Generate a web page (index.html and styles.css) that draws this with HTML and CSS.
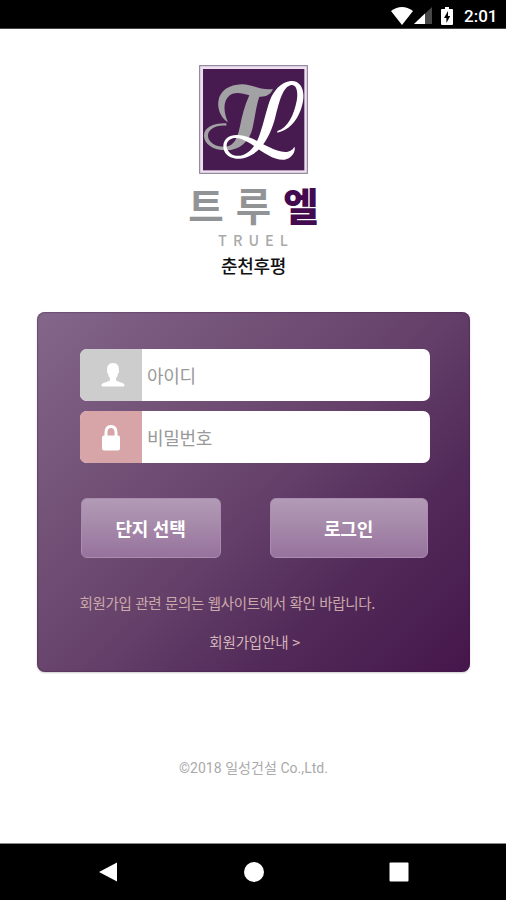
FILE: index.html
```
<!DOCTYPE html>
<html lang="ko">
<head>
<meta charset="utf-8">
<title>트루엘</title>
<link rel="stylesheet" href="styles.css">
</head>
<body>
<header class="status">
  <svg class="wifi" viewBox="0 0 22 18"><path d="M0 4Q11-4 22 4L11 18Z"/></svg>
  <svg class="signal" viewBox="0 0 18 17"><path class="dim" d="M18 0V17H0Z"/><path d="M11 6.600V17H0Z"/></svg>
  <svg class="battery" viewBox="0 0 12 18"><path d="M1 2H4V0H8V2H11Q12 2 12 3V17Q12 18 11 18H1Q0 18 0 17V3Q0 2 1 2Z"/><path class="bolt" d="M7 4L3 11H5.400V16L9.200 9H7Z"/></svg>
  <span class="clock">2:01</span>
</header>
<main>
  <section class="brand">
    <svg class="mark" viewBox="57 31 327 327">
      <rect class="frame" x="59" y="33" width="323" height="323"/>
      <rect class="plate" x="69" y="43" width="304" height="304"/>
      <path class="silver" d="M279 103C272 120 258 127 238 126C229 151 225 187 218 219C209 261 178 287 138 287C99 287 72 267 72 243C72 218 100 205 139 206L139 213C107 210 84 224 84 243C84 262 107 278 138 276C160 273 172 253 179 219C186 185 193 154 208 122C184 113 158 111 147 124C130 140 129 168 144 203C124 190 112 165 115 141C119 107 148 90 185 89C215 88 244 109 279 103Z"/>
      <path class="white" d="M292 229C324 220 342 180 350 139C356 106 347 87 331 92C306 100 297 147 286 187C277 223 262 256 241 280C218 304 190 314 168 312C143 309 129 293 130 273C131 252 149 240 172 241C208 243 235 261 267 277C297 292 330 301 343 276C349 288 335 313 314 315C282 318 249 292 218 271C191 252 164 243 148 256C131 269 142 299 167 303C195 307 220 284 234 253C249 216 255 180 269 139C281 107 304 82 332 79C361 77 375 104 369 140C361 188 330 228 292 234Z"/>
    </svg>
    <div class="name"><span>트</span><span>루</span><span class="accent">엘</span></div>
    <div class="latin">TRUEL</div>
    <div class="site">춘천후평</div>
  </section>
  <form class="card">
    <label class="field">
      <span class="tag"><svg class="user" viewBox="0 0 24 24"><path d="M12 0C7.500 0 5.800 3 6.200 7C5.500 8 6 10 7 10.500C7.400 13 8 14 9 15V17C8 19 1 19 .5 22Q.2 23.500 2 23.500H22Q23.800 23.500 23.500 22C23 19 16 19 15 17V15C16 14 16.600 13 17 10.500C18 10 18.500 8 17.800 7C18.200 3 16.500 0 12 0Z"/></svg></span>
      <input type="text" placeholder="아이디">
    </label>
    <label class="field">
      <span class="tag rose"><svg class="lock" viewBox="0 0 18 26"><path class="shackle" d="M4 12V7.500Q4 1.500 9 1.500T14 7.500V12"/><rect y="10.500" width="18" height="15" rx="2"/></svg></span>
      <input type="password" placeholder="비밀번호">
    </label>
    <div class="actions">
      <button type="button" class="choose">단지 선택</button>
      <button type="button" class="login">로그인</button>
    </div>
    <p class="note">회원가입 관련 문의는 웹사이트에서 확인 바랍니다.</p>
    <a class="guide">회원가입안내 &gt;</a>
  </form>
  <footer class="copy">©2018 일성건설 Co.,Ltd.</footer>
</main>
<nav class="nav">
  <svg viewBox="0 0 20 20"><path d="M19 .5V19.500L1 10Z"/></svg>
  <svg viewBox="0 0 20 20"><circle cx="10" cy="10" r="10"/></svg>
  <svg viewBox="0 0 20 20"><rect x=".5" y=".5" width="19" height="19" rx="1"/></svg>
</nav>
</body>
</html>
```
FILE: styles.css
```
* { box-sizing: border-box; }
body {
  margin: 0;
  height: 900px;
  display: flex;
  flex-direction: column;
  background: #fff;
  font-family: Roboto, "Noto Sans CJK KR", sans-serif;
  overflow: hidden;
}
svg { display: block; }
.status {
  height: 29px;
  padding: 3px 9px 0 0;
  display: flex;
  flex: none;
  align-items: center;
  justify-content: flex-end;
  background: #000;
  border-bottom: 1px solid #444;
  color: #fff;
}
.status svg { fill: #fff; }
.wifi { width: 22px; height: 18px; }
.signal { width: 18px; height: 17px; margin-left: 1px; }
.status .dim { fill: #484848; }
.battery { width: 12px; height: 18px; margin-left: 9px; }
.status .bolt { fill: #000; }
.clock { width: 33px; margin-left: 11px; font-size: 17px; font-weight: 500; line-height: 20px; white-space: nowrap; }
main { flex: 1; display: flex; flex-direction: column; align-items: center; padding-left: 1px; }
.brand {
  height: 282.500px;
  padding-top: 36px;
  display: flex;
  flex-direction: column;
  align-items: center;
}
.mark { width: 109px; height: 109px; }
.frame { fill: #eee0f0; stroke: #81758a; stroke-width: 3; }
.plate { fill: #481b50; }
.silver { fill: #a2a2a5; }
.white { fill: #fff; }
.name {
  height: 56px;
  padding-top: 9px;
  display: flex;
  gap: 12px;
  color: #929395;
  font: 700 38.500px/42px "Noto Sans CJK KR", sans-serif;
}
.name .accent { color: #430a50; font-weight: 900; }
.latin {
  height: 18px;
  padding-left: 5px;
  color: #aaa;
  font: 500 14.500px/19px "Noto Sans CJK KR", sans-serif;
  letter-spacing: 6px;
}
.site { color: #111; font-size: 18px; font-weight: 500; line-height: 37px; letter-spacing: -.3px; }
.card {
  width: 433px;
  height: 360.500px;
  padding: 37.500px 40px 0 42.500px;
  display: flex;
  flex-direction: column;
  border-radius: 8px;
  background: linear-gradient(135deg, #83678a 0%, #755479 25%, #66426b 50%, #522a59 73%, #45164b 100%);
  box-shadow: inset 0 0 2px #421449, 0 1px 2px #ccc;
}
.field {
  width: 350px;
  height: 52px;
  margin-bottom: 10px;
  display: flex;
  flex: none;
  border-radius: 7px;
  overflow: hidden;
  background: #fff;
}
.tag { width: 62.500px; display: grid; place-items: center; background: #cdcdcd; }
.rose { background: #d7a5a7; }
.tag svg { fill: #fff; }
.user { width: 24px; height: 24px; margin: 0 0 0 4px; }
.lock { width: 18px; height: 26px; margin: 2px 0 0 1px; }
.lock .shackle { fill: none; stroke: #fff; stroke-width: 3; }
input {
  width: 287px;
  padding: 0 5px 1px;
  border: 0;
  outline: 0;
  background: none;
  font: 400 18px "Noto Sans CJK KR", sans-serif;
  letter-spacing: -.3px;
}
input::placeholder { color: #999; opacity: 1; }
.actions {
  width: 347px;
  height: 60px;
  margin: 25px 0 0 1px;
  display: flex;
  flex: none;
  justify-content: space-between;
}
button {
  padding: 0 0 1px;
  border: 1px solid #a98caf;
  border-radius: 6px;
  color: #fff;
  background: linear-gradient(#b29bb6, #a68aaa 45%, #96729d);
  font: 700 18px "Noto Sans CJK KR", sans-serif;
  letter-spacing: -.3px;
}
.choose { width: 140px; }
.login { width: 158px; }
.note { margin: 34px 0 0; color: #cba9ab; font: 400 14.500px/22px "Noto Sans CJK KR", sans-serif; letter-spacing: -.33px; white-space: nowrap; }
.guide { margin: 17px 0 0; align-self: center; color: #d4b5b9; font: 400 14.500px/22px "Noto Sans CJK KR", sans-serif; letter-spacing: -.15px; }
.copy { margin-top: 83.500px; color: #aaa; font-size: 14px; line-height: 24px; letter-spacing: .05px; }
.nav {
  height: 57px;
  padding: 0 97px 0 98px;
  display: flex;
  flex: none;
  align-items: center;
  justify-content: space-between;
  background: #000;
  border-top: 1px solid #888;
}
.nav svg { width: 20px; height: 20px; fill: #fff; }
```
